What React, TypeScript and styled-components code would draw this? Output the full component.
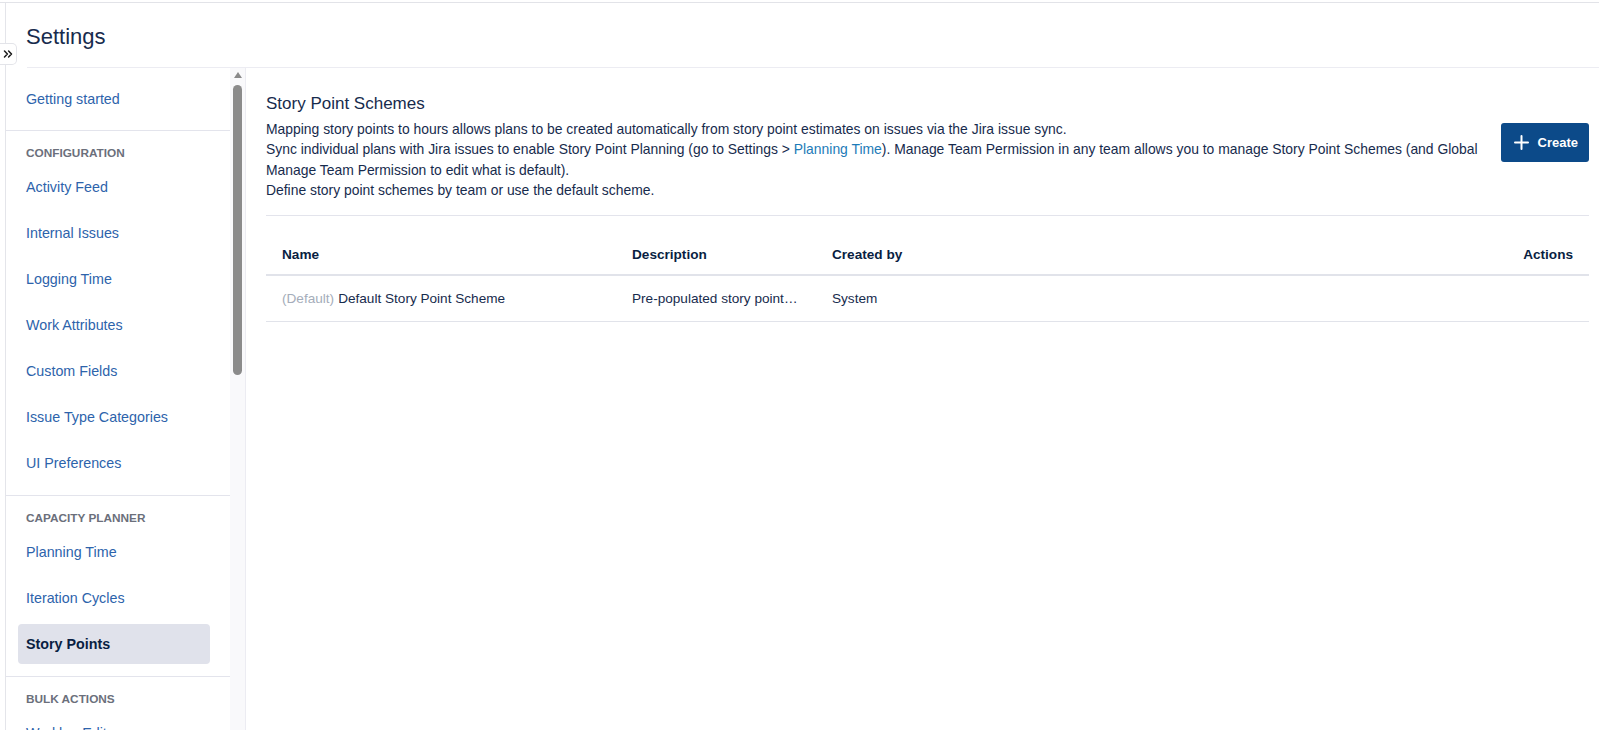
import React from "react";
import styled, { createGlobalStyle } from "styled-components";
import { ChevronsRight } from "lucide-react";

const GlobalStyle = createGlobalStyle`
  html, body {
    margin: 0;
    padding: 0;
    height: 100%;
    overflow: hidden;
    background: #ffffff;
  }
  body {
    font-family: "Liberation Sans", Arial, sans-serif;
    color: #172b4d;
  }
  * {
    box-sizing: border-box;
  }
`;

interface NavSection {
  title?: string;
  items: string[];
}

const sections: NavSection[] = [
  { items: ["Getting started"] },
  {
    title: "Configuration",
    items: [
      "Activity Feed",
      "Internal Issues",
      "Logging Time",
      "Work Attributes",
      "Custom Fields",
      "Issue Type Categories",
      "UI Preferences",
    ],
  },
  { title: "Capacity Planner", items: ["Planning Time", "Iteration Cycles", "Story Points"] },
  { title: "Bulk Actions", items: ["Worklog Editor"] },
  { title: "Permissions", items: ["Permission Roles", "Global Permissions", "Team Permissions"] },
  { title: "Accounts", items: ["Account Categories", "Category Types", "Customers", "Links"] },
];

const activeItem = "Story Points";

const Page = styled.div`
  position: relative;
  display: flex;
  height: calc(100vh - 3px);
  margin-top: 2px;
  border-top: 1px solid #e2e3e8;
  overflow: hidden;
`;

const Rail = styled.div`
  width: 6px;
  flex-shrink: 0;
  border-right: 1px solid #e4e5ea;
`;

const ExpandButton = styled.button`
  position: absolute;
  left: 0;
  top: 40px;
  width: 17px;
  height: 22px;
  padding: 0;
  display: flex;
  align-items: center;
  justify-content: center;
  background: #ffffff;
  border: 1px solid #e3e4e9;
  border-left: none;
  border-radius: 0 5px 5px 0;
  color: #1b1b1b;
  cursor: pointer;
`;

const Frame = styled.div`
  flex: 1;
  display: flex;
  flex-direction: column;
  min-width: 0;
`;

const Header = styled.header`
  height: 65px;
  flex-shrink: 0;
  margin-left: 21px;
  display: flex;
  align-items: center;
  padding-top: 4px;
  border-bottom: 1px solid #ececf2;
`;

const PageTitle = styled.h1`
  margin: 0 0 0 -1px;
  font-size: 22px;
  font-weight: 400;
  color: #172b4d;
`;

const Body = styled.div`
  flex: 1;
  display: flex;
  min-height: 0;
`;

const Sidebar = styled.nav`
  width: 240px;
  flex-shrink: 0;
  display: flex;
  border-right: 1px solid #ececf2;
  overflow: hidden;
`;

const NavList = styled.div`
  flex: 1;
  min-width: 0;
  overflow: hidden;
`;

const ScrollTrack = styled.div`
  width: 15px;
  flex-shrink: 0;
  display: flex;
  flex-direction: column;
  align-items: center;
  gap: 7px;
  padding-top: 4px;
  background: #f9f9fb;
`;

const ScrollArrow = styled.div`
  width: 0;
  height: 0;
  border-left: 4.5px solid transparent;
  border-right: 4.5px solid transparent;
  border-bottom: 6px solid #8a8a8a;
`;

const ScrollThumb = styled.div`
  width: 9px;
  height: 290px;
  border-radius: 4.5px;
  background: #8b8b8b;
`;

const Section = styled.div<{ $first?: boolean }>`
  display: flex;
  flex-direction: column;
  gap: 6px;
  padding: ${(p) => (p.$first ? "11px 0 11px" : "14px 0 12px")};
  border-bottom: 1px solid #e3e4ec;
`;

const SectionTitle = styled.div`
  padding-left: 20px;
  font-size: 11.8px;
  line-height: 16px;
  font-weight: 700;
  text-transform: uppercase;
  color: #6b6f7b;
`;

const NavItem = styled.a<{ $active?: boolean }>`
  display: flex;
  align-items: center;
  flex-shrink: 0;
  height: 40px;
  margin: 0 20px 0 12px;
  padding-left: 8px;
  border-radius: 4px;
  font-size: 14.3px;
  white-space: nowrap;
  text-decoration: none;
  color: ${(p) => (p.$active ? "#091e42" : "#2d63ab")};
  font-weight: ${(p) => (p.$active ? 700 : 400)};
  background: ${(p) => (p.$active ? "#e0e2eb" : "transparent")};
  cursor: pointer;
`;

const Main = styled.main`
  flex: 1;
  min-width: 0;
  padding: 23px 10px 0 20px;
`;

const Title = styled.h2`
  margin: 0 0 2px;
  font-size: 17px;
  line-height: 26px;
  font-weight: 400;
  color: #172b4d;
`;

const IntroRow = styled.div`
  display: flex;
  align-items: flex-start;
  gap: 12px;
  padding-bottom: 14px;
  border-bottom: 1px solid #e3e4ec;
`;

const Description = styled.div`
  flex: 1;
  font-size: 13.9px;
  line-height: 20.4px;
  color: #172b4d;
`;

const Link = styled.a`
  color: #1d7bb8;
  text-decoration: none;
  cursor: pointer;
`;

const CreateButton = styled.button`
  display: flex;
  align-items: center;
  gap: 9px;
  height: 39px;
  margin-top: 4px;
  padding: 0 11px 0 13px;
  border: none;
  border-radius: 3px;
  background: #0c4a89;
  color: #ffffff;
  font-family: inherit;
  font-size: 13px;
  font-weight: 700;
  cursor: pointer;
`;

const Table = styled.div`
  margin-top: 20px;
`;

const Row = styled.div<{ $head?: boolean }>`
  display: grid;
  grid-template-columns: 350px 200px 1fr 120px;
  align-items: center;
  height: ${(p) => (p.$head ? "40px" : "46px")};
  padding: 0 16px;
  font-size: 13.6px;
  font-weight: ${(p) => (p.$head ? 700 : 400)};
  color: ${(p) => (p.$head ? "#091e42" : "#172b4d")};
  border-bottom: ${(p) => (p.$head ? "2px" : "1px")} solid #e1e3ea;
`;

const Cell = styled.div<{ $right?: boolean }>`
  white-space: nowrap;
  overflow: hidden;
  text-overflow: ellipsis;
  padding-right: ${(p) => (p.$right ? "0" : "32px")};
  text-align: ${(p) => (p.$right ? "right" : "left")};
`;

const DefaultTag = styled.span`
  color: #a5adba;
  margin-right: 4px;
`;

const PlusIcon = () => (
  <svg width="15" height="15" viewBox="0 0 15 15" aria-hidden="true">
    <path d="M7.5 1v13M1 7.5h13" stroke="currentColor" strokeWidth="2" strokeLinecap="round" fill="none" />
  </svg>
);

export default function App() {
  return (
    <>
      <GlobalStyle />
      <Page>
        <Rail />
        <ExpandButton aria-label="Expand">
          <ChevronsRight size={14} strokeWidth={2.6} />
        </ExpandButton>
        <Frame>
          <Header>
            <PageTitle>Settings</PageTitle>
          </Header>
          <Body>
            <Sidebar>
              <NavList>
                {sections.map((s, i) => (
                  <Section key={i} $first={!s.title}>
                    {s.title && <SectionTitle>{s.title}</SectionTitle>}
                    {s.items.map((item) => (
                      <NavItem key={item} $active={item === activeItem}>
                        {item}
                      </NavItem>
                    ))}
                  </Section>
                ))}
              </NavList>
              <ScrollTrack>
                <ScrollArrow />
                <ScrollThumb />
              </ScrollTrack>
            </Sidebar>
            <Main>
              <Title>Story Point Schemes</Title>
              <IntroRow>
                <Description>
                  Mapping story points to hours allows plans to be created automatically from story point estimates
                  on issues via the Jira issue sync.
                  <br />
                  Sync individual plans with Jira issues to enable Story Point Planning (go to Settings &gt;{" "}
                  <Link>Planning Time</Link>). Manage Team Permission in any team allows you to manage Story Point
                  Schemes (and Global Manage Team Permission to edit what is default).
                  <br />
                  Define story point schemes by team or use the default scheme.
                </Description>
                <CreateButton>
                  <PlusIcon />
                  Create
                </CreateButton>
              </IntroRow>
              <Table>
                <Row $head>
                  <Cell>Name</Cell>
                  <Cell>Description</Cell>
                  <Cell>Created by</Cell>
                  <Cell $right>Actions</Cell>
                </Row>
                <Row>
                  <Cell>
                    <DefaultTag>(Default)</DefaultTag>Default Story Point Scheme
                  </Cell>
                  <Cell>Pre-populated story points scheme</Cell>
                  <Cell>System</Cell>
                  <Cell $right />
                </Row>
              </Table>
            </Main>
          </Body>
        </Frame>
      </Page>
    </>
  );
}
